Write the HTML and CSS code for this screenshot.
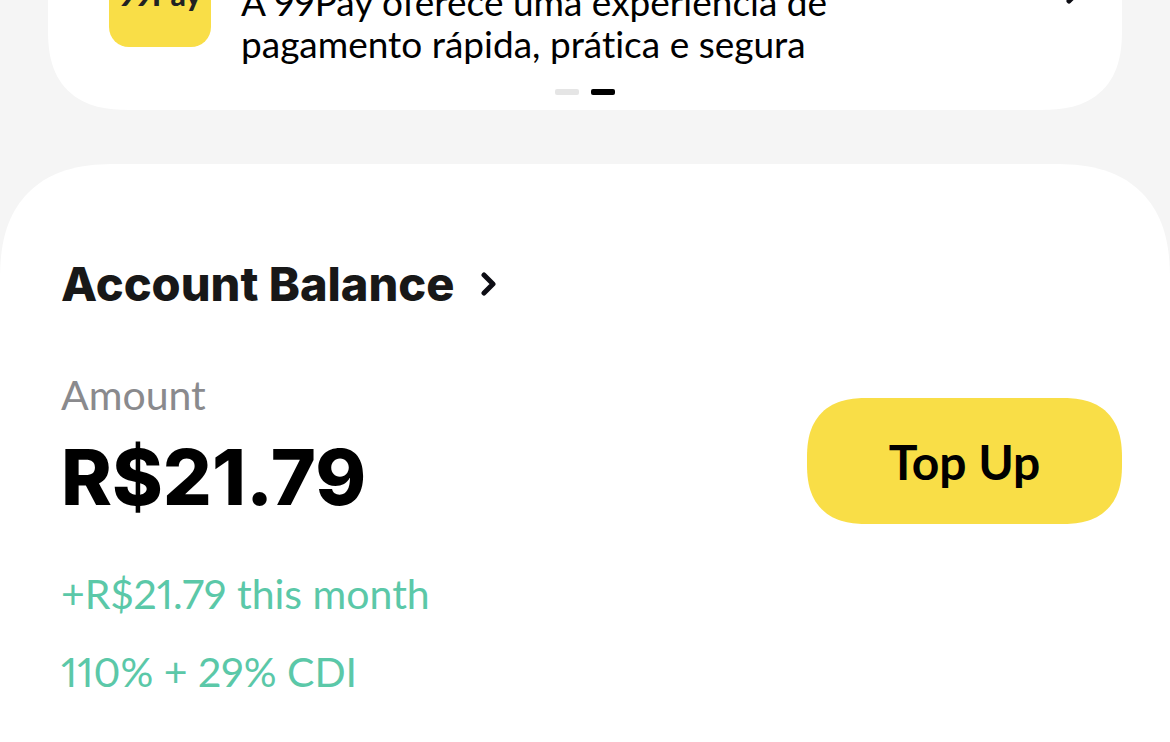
FILE: index.html
```html
<!DOCTYPE html>
<html lang="en">

<head>
    <meta charset="UTF-8">
    <meta name="viewport" content="width=device-width, initial-scale=1.0">
    <title>99Pay</title>
    <link rel="stylesheet" href="styles.css">
</head>

<body>
    <section class="banner" lang="pt-BR">
        <div class="banner-row">
            <div class="logo">99Pay</div>
            <p class="banner-text">A 99Pay oferece uma experiência de pagamento rápida, prática e segura</p>
            <svg class="chevron" viewBox="0 0 16 26" aria-hidden="true">
                <path d="M3 4l9 9L3 22" />
            </svg>
        </div>
        <div class="dots">
            <span class="dot"></span>
            <span class="dot active"></span>
        </div>
    </section>

    <main class="balance">
        <h1 class="title">
            <a href="#">Account Balance
                <svg class="chevron" viewBox="0 0 16 26" aria-hidden="true">
                    <path d="M3 4l9 9L3 22" />
                </svg>
            </a>
        </h1>
        <div class="balance-row">
            <div>
                <p class="label">Amount</p>
                <p class="amount">R$21.79</p>
            </div>
            <button class="top-up" type="button">Top Up</button>
        </div>
        <p class="earnings">+R$21.79 this month</p>
        <p class="earnings">110% + 29% CDI</p>
    </main>
</body>

</html>
```
FILE: styles.css
```css
:root {
    --yellow: #f9de47;
    --green: #5bc8a8;
    --grey: #8a8a8d;
}

* {
    margin: 0;
    padding: 0;
    box-sizing: border-box;
}

body {
    min-height: 100vh;
    background-color: #f5f5f5;
    font-family: Lato, "Open Sans", sans-serif;
    font-variant-ligatures: none;
    font-variant-numeric: proportional-nums;
    color: #000;

    display: flex;
    flex-direction: column;
    overflow: hidden;
}

/* promo card, scrolled partly out of view */
.banner {
    margin: -103px 48px 54px;
    padding: 48px 40px 15px 61px;
    background-color: #fff;
    border-radius: 80px;
    corner-shape: superellipse(1.3);
}

.banner-row {
    display: flex;
    align-items: flex-start;
    gap: 30px;
}

.logo {
    flex: none;
    width: 102px;
    height: 102px;
    background-color: var(--yellow);
    border-radius: 20px;
    color: #222;
    font-size: 30px;
    font-weight: 900;
    line-height: 98px;
    text-align: center;
}

.banner-text {
    flex: 1;
    max-width: 620px;
    padding-top: 36px;
    font-size: 37px;
    line-height: 42px;
}

.chevron {
    width: 16px;
    height: 26px;
    fill: none;
    stroke: #0d0d14;
    stroke-width: 5;
    stroke-linecap: round;
    stroke-linejoin: round;
}

.banner-row .chevron {
    margin: 34px 0 0 auto;
}

.dots {
    display: flex;
    justify-content: center;
    gap: 12px;
    margin-top: 24px;
    margin-right: 21px;
}

.dot {
    width: 24px;
    height: 6px;
    border-radius: 2px;
    background-color: #e5e5e5;
}

.dot.active {
    background-color: #000;
}

.balance {
    flex: 1;
    padding: 90px 48px 30px 61px;
    background-color: #fff;
    border-radius: 116px 116px 0 0;
    corner-shape: superellipse(1.3);
}

.title {
    font-family: Inter, sans-serif;
    font-size: 47px;
    font-weight: 800;
    line-height: 60px;
}

.title a {
    display: inline-flex;
    align-items: center;
    gap: 26px;
    color: #181818;
    text-decoration: none;
}

.balance-row {
    display: flex;
    justify-content: space-between;
    align-items: flex-end;
    margin: 56px 0 34px;
}

.label {
    color: var(--grey);
    font-size: 41px;
    line-height: 50px;
}

.amount {
    font-family: Inter, sans-serif;
    font-size: 77px;
    font-weight: 800;
    line-height: 114px;
}

.top-up {
    width: 315px;
    height: 126px;
    margin-bottom: 10px;
    border: none;
    border-radius: 60px;
    corner-shape: superellipse(1.3);
    background-color: var(--yellow);
    color: #000;
    font-family: inherit;
    font-size: 48px;
    font-weight: 700;
    cursor: pointer;
}

.earnings {
    color: var(--green);
    font-size: 41px;
    line-height: 52px;
}

.earnings + .earnings {
    margin-top: 26px;
}
```
